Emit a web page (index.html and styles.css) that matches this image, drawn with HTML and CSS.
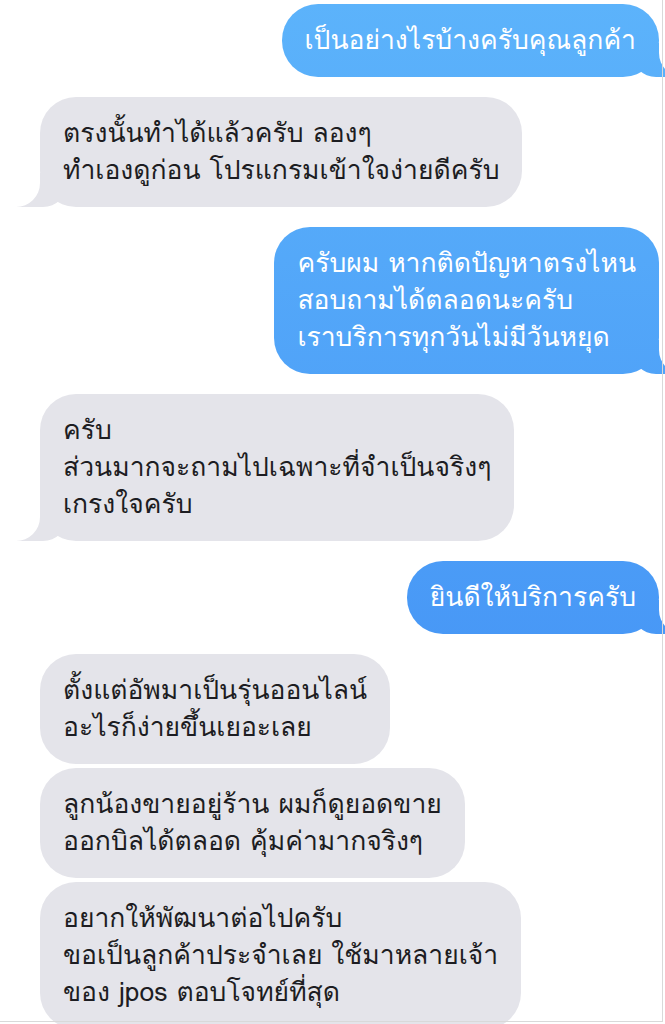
FILE: index.html
```html
<!DOCTYPE html>
<html lang="th">
<head>
<meta charset="utf-8">
<link rel="stylesheet" href="styles.css">
</head>
<body>
<div class="frame">
  <div class="chat">
    <div class="row out group"><div class="bubble out tail">เป็นอย่างไรบ้างครับคุณลูกค้า</div></div>
    <div class="row in group"><div class="bubble in tail">ตรงนั้นทำได้แล้วครับ ลองๆ<br>ทำเองดูก่อน โปรแกรมเข้าใจง่ายดีครับ</div></div>
    <div class="row out group"><div class="bubble out tail">ครับผม หากติดปัญหาตรงไหน<br>สอบถามได้ตลอดนะครับ<br>เราบริการทุกวันไม่มีวันหยุด</div></div>
    <div class="row in group"><div class="bubble in tail">ครับ<br>ส่วนมากจะถามไปเฉพาะที่จำเป็นจริงๆ<br>เกรงใจครับ</div></div>
    <div class="row out group"><div class="bubble out tail">ยินดีให้บริการครับ</div></div>
    <div class="row in group"><div class="bubble in">ตั้งแต่อัพมาเป็นรุ่นออนไลน์<br>อะไรก็ง่ายขึ้นเยอะเลย</div></div>
    <div class="row in"><div class="bubble in">ลูกน้องขายอยู่ร้าน ผมก็ดูยอดขาย<br>ออกบิลได้ตลอด คุ้มค่ามากจริงๆ</div></div>
    <div class="row in"><div class="bubble in">อยากให้พัฒนาต่อไปครับ<br>ขอเป็นลูกค้าประจำเลย ใช้มาหลายเจ้า<br>ของ jpos ตอบโจทย์ที่สุด</div></div>
  </div>
</div>
</body>
</html>
```
FILE: styles.css
```css
html, body {
  margin: 0;
  padding: 0;
  background: #ffffff;
}
body {
  width: 665px;
  height: 1024px;
  overflow: hidden;
  font-family: "Loma", "Noto Sans Thai Looped", Tahoma, "DejaVu Sans", sans-serif;
}
.frame {
  position: relative;
  width: 665px;
  height: 1024px;
  overflow: hidden;
}
.frame::after {
  content: "";
  position: absolute;
  left: 0;
  top: 0;
  width: 662px;
  height: 1021px;
  border-right: 1px solid #d9d9d9;
  border-bottom: 1px solid #d9d9d9;
  pointer-events: none;
  z-index: 5;
}
.chat {
  display: flex;
  flex-direction: column;
  padding: 4px 6px 0 40px;
}
.row {
  display: flex;
  margin-top: 4px;
}
.row.group {
  margin-top: 20px;
}
.row:first-child {
  margin-top: 0;
}
.row.out {
  justify-content: flex-end;
}
.row.in {
  justify-content: flex-start;
}
.bubble {
  position: relative;
  z-index: 0;
  white-space: nowrap;
  font-size: 26.5px;
  line-height: 37px;
  padding: 18px 23px;
  border-radius: 36px;
}
.bubble.in {
  background: #e4e4ea;
  color: #1d1d22;
}
.bubble.out {
  color: #ffffff;
  background: linear-gradient(180deg, #5cb3fb 0px, #3c88f3 1024px);
  background-attachment: fixed;
}
.bubble.tail::before,
.bubble.tail::after {
  content: "";
  position: absolute;
  bottom: 0;
  z-index: -1;
}
.bubble.in.tail::before {
  left: -23px;
  width: 50px;
  height: 34px;
  background: #e4e4ea;
  border-bottom-right-radius: 24px;
}
.bubble.in.tail::after {
  left: -60px;
  width: 60px;
  height: 34px;
  background: #ffffff;
  border-bottom-right-radius: 24px;
}
.bubble.out.tail::before {
  right: -23px;
  width: 50px;
  height: 34px;
  background: linear-gradient(180deg, #5cb3fb 0px, #3c88f3 1024px);
  background-attachment: fixed;
  border-bottom-left-radius: 24px;
}
.bubble.out.tail::after {
  right: -60px;
  width: 60px;
  height: 34px;
  background: #ffffff;
  border-bottom-left-radius: 24px;
}
```
